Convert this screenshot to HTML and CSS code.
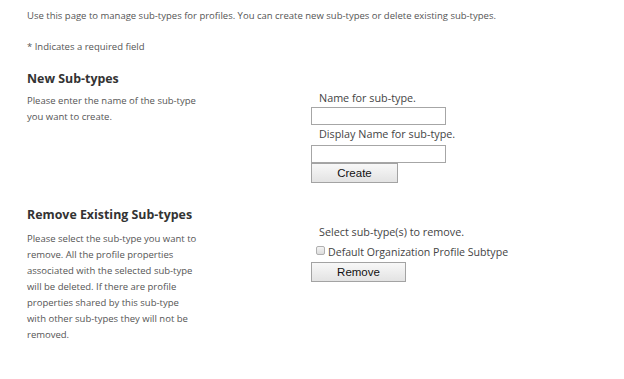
FILE: index.html
```html
<!DOCTYPE html>
<html lang="en">
<head>
    <meta charset="UTF-8">
    <title>Manage Sub-types</title>
    <link rel="stylesheet" href="styles.css">
</head>
<body>
    <div class="page">
        <p class="intro">Use this page to manage sub-types for profiles. You can create new sub-types or delete existing sub-types.</p>
        <p class="required">* Indicates a required field</p>

        <div class="section section-new">
            <div class="side">
                <h3>New Sub-types</h3>
                <p class="desc">Please enter the name of the sub-type you want to create.</p>
            </div>
            <div class="fields">
                <label for="subtype-name">Name for sub-type.</label>
                <input type="text" id="subtype-name">
                <label for="subtype-display">Display Name for sub-type.</label>
                <input type="text" id="subtype-display">
                <button type="button" class="btn btn-create">Create</button>
            </div>
        </div>

        <div class="section section-remove">
            <div class="side">
                <h3>Remove Existing Sub-types</h3>
                <p class="desc">Please select the sub-type you want to remove. All the profile properties associated with the selected sub-type will be deleted. If there are profile properties shared by this sub-type with other sub-types they will not be removed.</p>
            </div>
            <div class="fields">
                <label>Select sub-type(s) to remove.</label>
                <div class="check-row">
                    <span class="check"></span>
                    <span>Default Organization Profile Subtype</span>
                </div>
                <button type="button" class="btn btn-remove">Remove</button>
            </div>
        </div>
    </div>
</body>
</html>
```

FILE: styles.css
```css
body {
    margin: 0;
    padding: 0;
    background: #fff;
    font-family: "Open Sans", "Noto Sans", sans-serif;
    color: #555;
}
.page {
    padding: 8px 0 0 27px;
}
.intro, .required {
    margin: 0;
    font-size: 9.5px;
    line-height: 16px;
}
.required {
    margin-top: 15px;
}
.section {
    display: flex;
}
.section-new {
    margin-top: 14px;
}
.section-remove {
    margin-top: 22px;
}
.side {
    width: 284px;
}
.side h3 {
    margin: 0;
    font-size: 12.4px;
    line-height: 20px;
    font-weight: bold;
    color: #333;
}
.desc {
    margin: 4px 0 0 0;
    width: 173px;
    font-size: 9.5px;
    line-height: 16px;
}
.section-remove .desc {
    margin-top: 6px;
}
.fields {
    display: flex;
    flex-direction: column;
    align-items: flex-start;
    padding-top: 20px;
}
.section-remove .fields {
    padding-top: 18px;
}
.fields label {
    display: block;
    padding-left: 8px;
    font-size: 10.8px;
    line-height: 18px;
    color: #444;
}
.fields input {
    box-sizing: border-box;
    width: 135px;
    height: 18px;
    margin: 0;
    border: 1px solid #a6a6a6;
    background: #fff;
}
#subtype-display {
    margin-top: 2px;
}
.btn {
    box-sizing: border-box;
    height: 20px;
    margin: 0;
    padding: 0;
    border: 1px solid #a3a3a3;
    background: linear-gradient(#f8f8f8, #e3e3e3);
    font-family: "Liberation Sans", Arial, sans-serif;
    font-size: 11.5px;
    color: #111;
}
.btn-create {
    width: 87px;
}
.btn-remove {
    width: 95px;
    margin-top: 1px;
}
.check-row {
    display: flex;
    align-items: center;
    height: 18px;
    margin-top: 2px;
    padding-left: 5px;
    font-size: 10.6px;
    color: #444;
}
.check {
    box-sizing: border-box;
    width: 9px;
    height: 9px;
    margin: -4px 3px 0 0;
    border: 1px solid #b0b0b0;
    border-radius: 2px;
    background: linear-gradient(#f4f4f4, #dcdcdc);
}
```
